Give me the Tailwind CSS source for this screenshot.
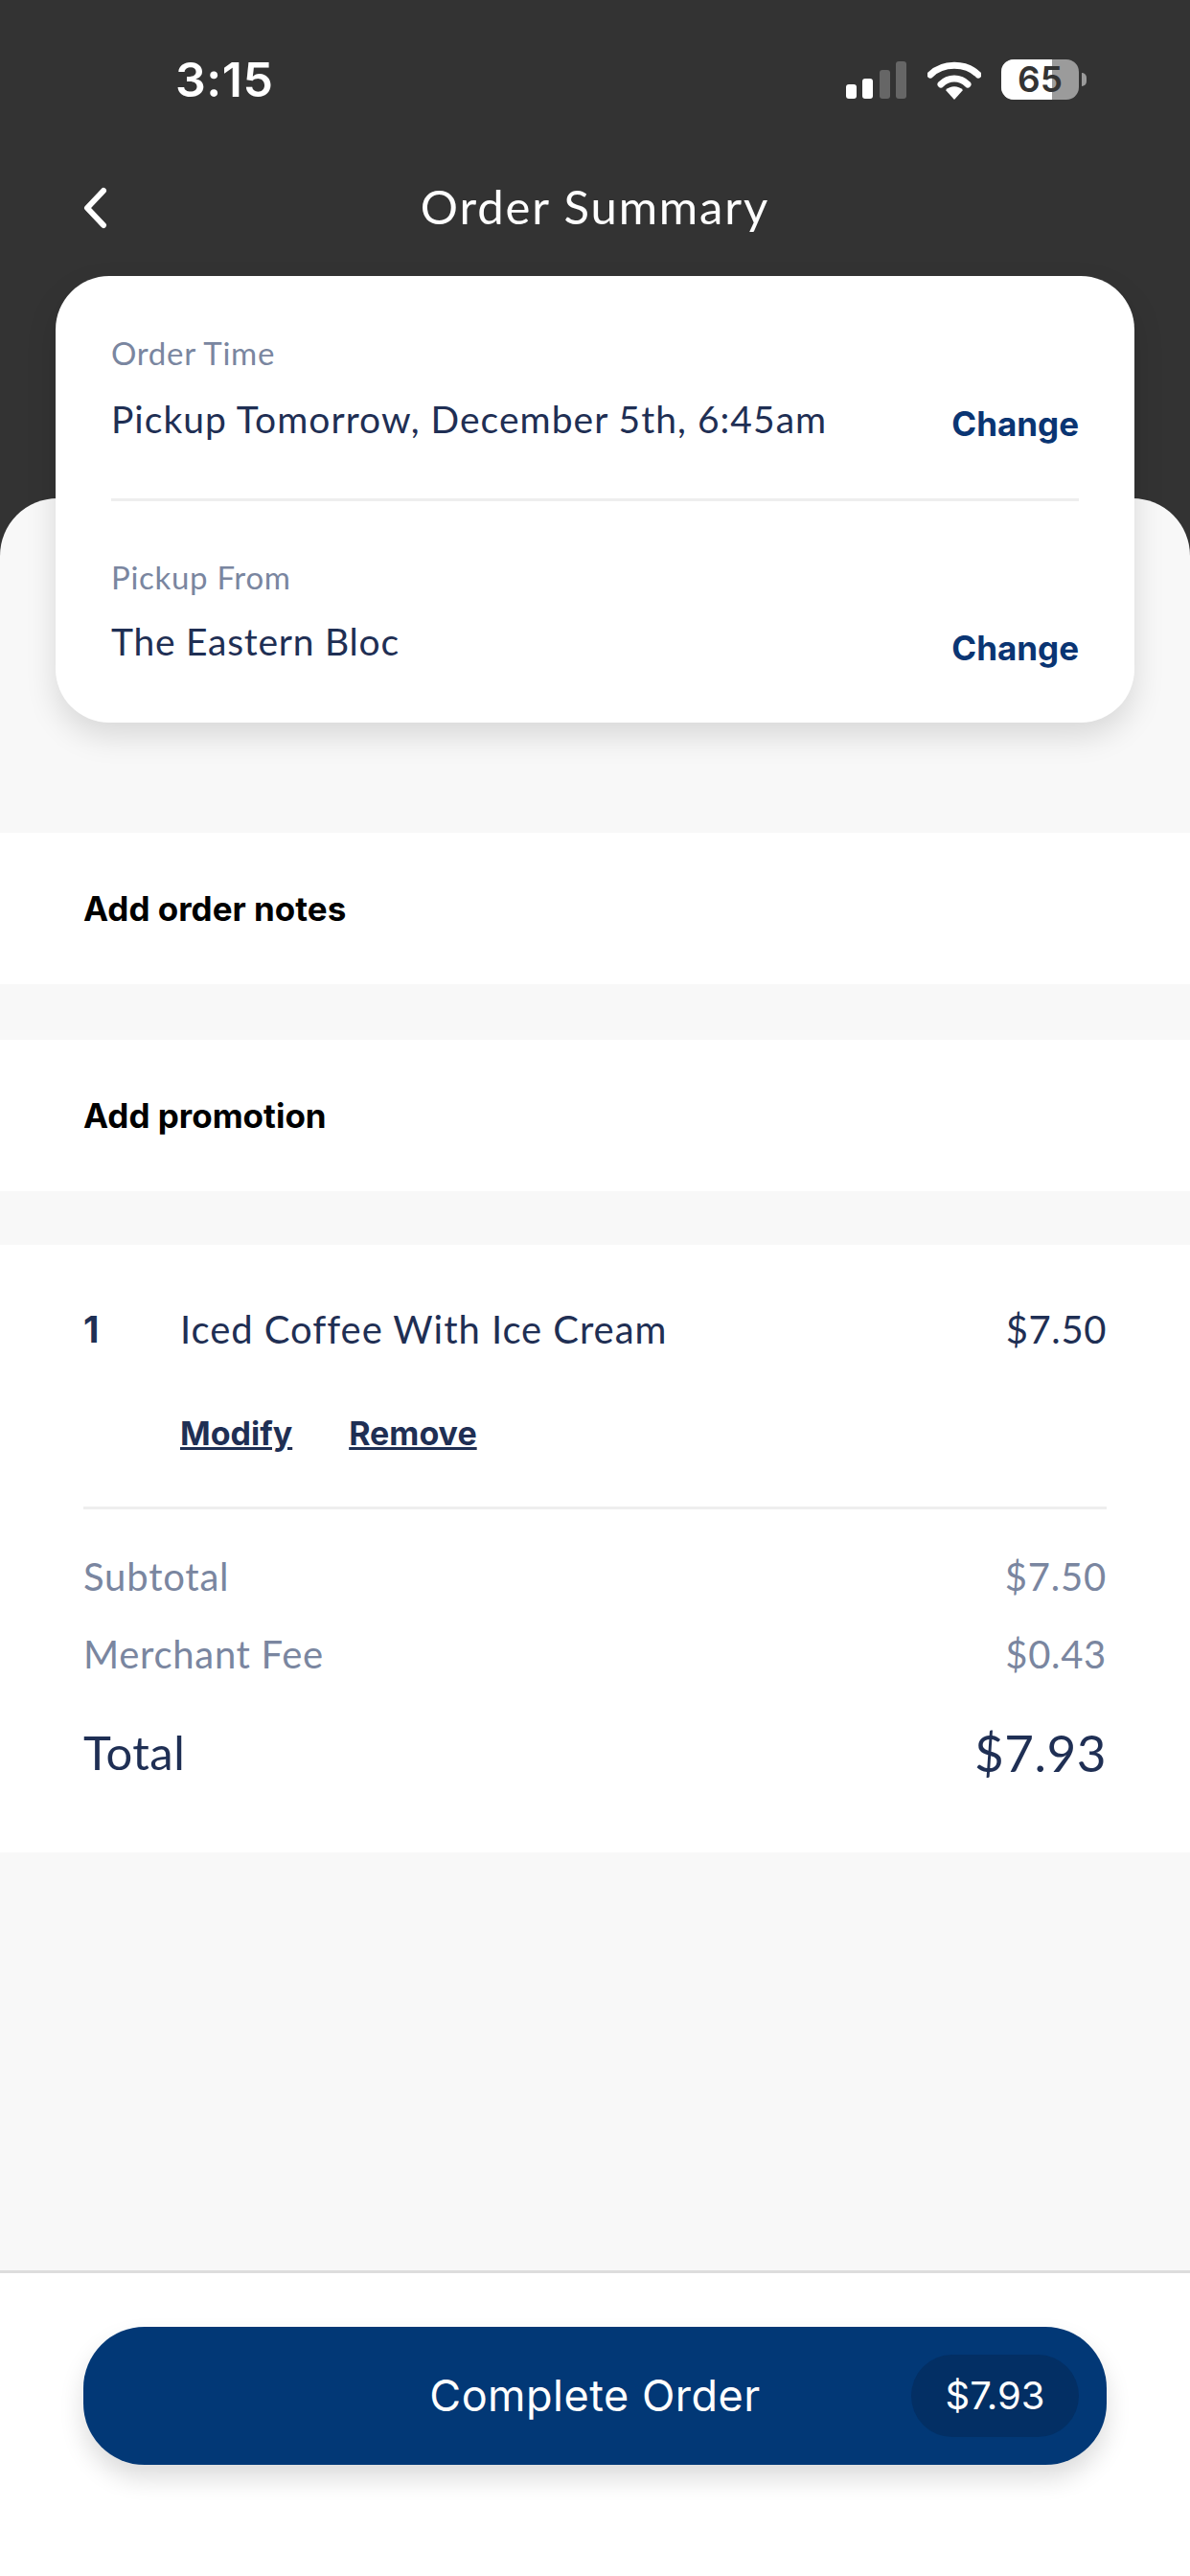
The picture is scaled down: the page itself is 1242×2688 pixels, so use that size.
<!DOCTYPE html>
<html lang="en">
<head>
  <meta charset="UTF-8" />
  <title>Order Summary</title>
  <script src="https://cdn.jsdelivr.net/npm/@tailwindcss/browser@4"></script>
</head>
<body class="bg-[#333333] font-['Lato',sans-serif] text-[#1f2f54]">
  <div class="w-[1242px] h-[2688px] flex flex-col overflow-hidden">
    <!-- status bar -->
    <div class="h-[168px] shrink-0 flex items-start justify-between pt-[58px] pl-[183px] pr-[108px] text-white">
      <span class="font-['Inter',sans-serif] font-semibold text-[50px] leading-[50px] tracking-[0.5px]">3:15</span>
      <div class="flex items-end gap-[22px] pt-[4px]">
        <svg width="63" height="40" viewBox="0 0 63 40">
          <rect x="0" y="24" width="11" height="15" rx="3" fill="#fff" />
          <rect x="17" y="18" width="11" height="21" rx="3" fill="#fff" />
          <rect x="35" y="9" width="11" height="30" rx="3" fill="#666" />
          <rect x="52" y="0" width="11" height="39" rx="3" fill="#666" />
        </svg>
        <svg width="56" height="40" viewBox="0 0 56 40">
          <path d="M3 14 C16 1 40 1 53 14" fill="none" stroke="#fff" stroke-width="7" stroke-linecap="round" />
          <path d="M14 24 C22 16 34 16 42 24" fill="none" stroke="#fff" stroke-width="7" stroke-linecap="round" />
          <path d="M19 30 C24 25 32 25 37 30 L28 40 Z" fill="#fff" />
        </svg>
        <div class="flex items-center gap-[3px] -ml-[1px]">
          <div class="relative w-[81px] h-[42px] rounded-[13px] bg-[#9b9b9b] flex items-center justify-center">
            <div class="absolute left-0 top-0 bottom-0 w-[53px] rounded-l-[13px] bg-white"></div>
            <span class="relative font-['Inter',sans-serif] font-semibold text-[37px] leading-[42px] text-[#333333]">65</span>
          </div>
          <div class="w-[5px] h-[14px] rounded-r-full bg-[#9b9b9b]"></div>
        </div>
      </div>
    </div>

    <!-- nav -->
    <div class="relative h-[120px] shrink-0 flex items-start justify-center text-white">
      <svg class="absolute left-[85px] top-[27px]" width="28" height="44" viewBox="0 0 28 44">
        <path d="M23 4 L6 22 L23 40" fill="none" stroke="#fff" stroke-width="6" stroke-linecap="round" stroke-linejoin="round" />
      </svg>
      <h1 class="text-[49px] leading-[60px] pt-[17px] tracking-[1.9px]">Order Summary</h1>
    </div>

    <!-- pickup card -->
    <div class="relative z-10 shrink-0 mx-[58px] h-[466px] rounded-[56px] bg-white shadow-[0_14px_32px_rgba(0,0,0,0.13)] px-[58px]">
      <div class="h-[235px] border-b-[3px] border-[#eeeeee] pt-[60px]">
        <div class="text-[33px] leading-[40px] text-[#7a86a0] tracking-[0.7px]">Order Time</div>
        <div class="flex justify-between items-start mt-[24px]">
          <span class="text-[39px] leading-[50px] tracking-[1.03px]">Pickup Tomorrow, December 5th, 6:45am</span>
          <span class="font-['Inter',sans-serif] font-bold text-[35px] leading-[50px] mt-[5px] text-[#0a3573]">Change</span>
        </div>
      </div>
      <div class="pt-[59px]">
        <div class="text-[33px] leading-[40px] text-[#7a86a0] tracking-[0.7px]">Pickup From</div>
        <div class="flex justify-between items-start mt-[22px]">
          <span class="text-[39px] leading-[50px] tracking-[0.75px]">The Eastern Bloc</span>
          <span class="font-['Inter',sans-serif] font-bold text-[35px] leading-[50px] mt-[7px] text-[#0a3573]">Change</span>
        </div>
      </div>
    </div>

    <!-- sheet -->
    <div class="flex-1 -mt-[234px] rounded-t-[60px] bg-[#f8f8f8] pt-[349px] flex flex-col">
      <div class="h-[158px] bg-white flex items-center pt-[1px] px-[87px] font-['Inter',sans-serif] font-bold text-[35px] text-black">Add order notes</div>
      <div class="h-[158px] mt-[58px] bg-white flex items-center pt-[1px] px-[87px] font-['Inter',sans-serif] font-bold text-[35px] text-black">Add promotion</div>

      <div class="h-[634px] mt-[56px] bg-white px-[87px] pt-[58px]">
        <div class="flex items-center h-[60px]">
          <span class="w-[101px] font-['Inter',sans-serif] font-bold text-[38px]">1</span>
          <span class="flex-1 text-[40px] tracking-[0.95px]">Iced Coffee With Ice Cream</span>
          <span class="text-[40px] tracking-[0.6px]">$7.50</span>
        </div>
        <div class="flex gap-[59px] pl-[101px] mt-[48px] h-[60px] items-center font-['Inter',sans-serif] font-bold text-[34px] underline">
          <span>Modify</span>
          <span>Remove</span>
        </div>
        <div class="h-[3px] bg-[#eeeeee] mt-[47px]"></div>
        <div class="flex justify-between items-center h-[60px] mt-[40px] text-[40px] tracking-[0.8px] text-[#7a86a0]">
          <span>Subtotal</span>
          <span>$7.50</span>
        </div>
        <div class="flex justify-between items-center h-[60px] mt-[21px] text-[40px] tracking-[0.7px] text-[#7a86a0]">
          <span>Merchant Fee</span>
          <span>$0.43</span>
        </div>
        <div class="flex justify-between items-center h-[70px] mt-[38px] tracking-[0.5px]">
          <span class="text-[49px]">Total</span>
          <span class="text-[53px]">$7.93</span>
        </div>
      </div>

      <div class="flex-1"></div>

      <!-- footer -->
      <div class="h-[319px] shrink-0 bg-white border-t-[3px] border-[#dddddd] px-[87px] pt-[56px]">
        <div class="relative h-[144px] rounded-[64px] bg-[#023876] shadow-[0_14px_26px_rgba(0,0,0,0.14)] flex items-center justify-center">
          <span class="font-['Inter',sans-serif] text-[45px] text-white tracking-[0.5px]">Complete Order</span>
          <span class="absolute right-[29px] top-[29px] w-[175px] h-[86px] rounded-[43px] bg-[#032f64] flex items-center justify-center font-['Inter',sans-serif] text-[40px] text-white">$7.93</span>
        </div>
      </div>
    </div>
  </div>
</body>
</html>
